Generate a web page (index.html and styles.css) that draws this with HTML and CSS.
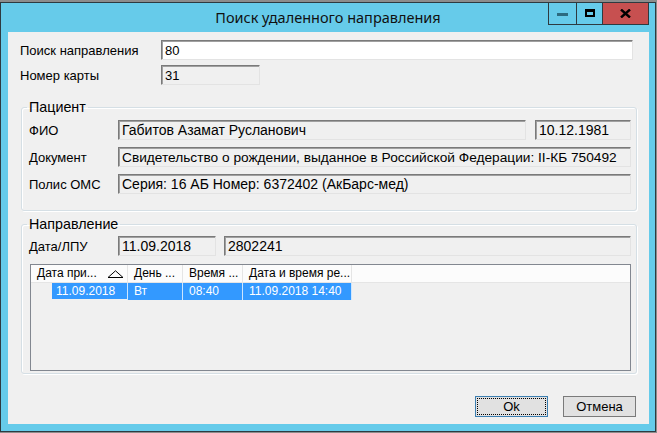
FILE: index.html
```html
<!DOCTYPE html>
<html lang="ru">
  <head>
    <meta charset="UTF-8" />
    <title>Поиск удаленного направления</title>
    <link rel="stylesheet" href="styles.css">
  </head>
  <body>
    <div class="window">
      <div class="titlebar">
        <span></span>
        <div class="title">Поиск удаленного направления</div>
        <div class="caption-btns">
          <span class="cbtn cbtn-min"><i></i></span>
          <span class="cbtn cbtn-max"><i></i></span>
          <span class="cbtn cbtn-close">
            <svg width="11" height="9" viewBox="0 0 11 9"><path d="M1 0.5 L10 8.5 M10 0.5 L1 8.5" stroke="#000" stroke-width="2.4"/></svg>
          </span>
        </div>
      </div>

      <div class="client">
        <div class="row top-row">
          <label class="lbl lbl-wide">Поиск направления</label>
          <div class="field field-white field-search">80</div>
        </div>
        <div class="row top-row">
          <label class="lbl lbl-wide">Номер карты</label>
          <div class="field field-card">31</div>
        </div>

        <!-- Patient -->
        <fieldset class="group group-patient">
          <legend>Пациент</legend>
          <div class="row">
            <label class="lbl">ФИО</label>
            <div class="field field-grow">Габитов Азамат Русланович</div>
            <div class="field field-date">10.12.1981</div>
          </div>
          <div class="row">
            <label class="lbl">Документ</label>
            <div class="field field-grow field-doc">Свидетельство о рождении, выданное в Российской Федерации: II-КБ 750492</div>
          </div>
          <div class="row">
            <label class="lbl">Полис ОМС</label>
            <div class="field field-grow">Серия: 16 АБ Номер: 6372402 (АкБарс-мед)</div>
          </div>
        </fieldset>

        <!-- Referral -->
        <fieldset class="group group-ref">
          <legend>Направление</legend>
          <div class="row">
            <label class="lbl">Дата/ЛПУ</label>
            <div class="field field-refdate">11.09.2018</div>
            <div class="field field-grow">2802241</div>
          </div>
          <div class="listview">
            <div class="lv-row lv-head">
              <div class="lv-cell c1">Дата при...
                <svg class="sort" width="17" height="8" viewBox="0 0 17 8"><path d="M1 7.5 L8.5 0.8 L16 7.5 Z" fill="none" stroke="#000" stroke-width="1"/></svg>
              </div>
              <div class="lv-cell c2">День ...</div>
              <div class="lv-cell c3">Время ...</div>
              <div class="lv-cell c4">Дата и время ре...</div>
            </div>
            <div class="lv-row lv-sel">
              <div class="lv-cell c1"><span class="hl">11.09.2018</span></div>
              <div class="lv-cell c2">Вт</div>
              <div class="lv-cell c3">08:40</div>
              <div class="lv-cell c4">11.09.2018 14:40</div>
            </div>
          </div>
        </fieldset>

        <div class="actions">
          <button class="btn btn-default"><span>Ok</span></button>
          <button class="btn">Отмена</button>
        </div>
      </div>
    </div>
  </body>
</html>
```

FILE: styles.css
```css
/* ---------- Base ---------- */
*{box-sizing:border-box;margin:0;padding:0;}
body{background:#8c8c8c;font-family:"Liberation Sans",Arial,sans-serif;font-size:13px;color:#000;width:657px;height:433px;overflow:hidden;}

/* ---------- Window frame ---------- */
.window{margin-top:2px;width:656px;height:430px;border:1px solid #2e3a40;background:#66cbea;display:flex;flex-direction:column;}
.titlebar{height:29px;display:grid;grid-template-columns:1fr auto 1fr;align-items:start;}
.title{font-family:"Noto Sans","Open Sans",sans-serif;font-size:14.5px;line-height:29px;color:#111;white-space:nowrap;}
.caption-btns{justify-self:end;display:flex;margin-right:6px;border:1px solid #2e3a40;border-top:none;height:22px;}
.cbtn{display:flex;align-items:center;justify-content:center;height:21px;}
.cbtn-min{width:28px;border-right:1px solid #2e3a40;}
.cbtn-min i{width:11px;height:3px;background:#2c6b80;margin-top:2px;}
.cbtn-max{width:26px;border-right:1px solid #2e3a40;}
.cbtn-max i{width:10px;height:8px;border:2px solid #000;border-top-width:3px;margin-top:-1px;}
.cbtn-close{width:45px;background:#c75050;}
.cbtn-close svg{margin-top:-1px;}

/* ---------- Client area ---------- */
.client{flex:1;margin:0 6px 7px 7px;background:#f0f0f0;padding:8px 12px 0 12px;display:flex;flex-direction:column;}
.row{display:flex;align-items:center;gap:9px;}
.top-row{gap:0;margin-bottom:5px;}
.lbl{width:80px;flex:none;white-space:nowrap;}
.lbl-wide{width:141px;}

.field{height:20px;line-height:17px;padding:1px 0 0 3px;border:1px solid;border-color:#7a7a7a #e3e3e3 #e3e3e3 #7a7a7a;box-shadow:inset 1px 1px 0 #a0a0a0;background:#f0f0f0;white-space:nowrap;overflow:hidden;font-size:14px;}
.field-white{background:#fff;}
.field-search{width:472px;font-size:13px;}
.field-card{width:99px;font-size:13px;}
.field-grow{flex:1;}
.field-doc{font-size:13.7px;}
.field-date{width:96px;}
.field-refdate{width:98px;margin-right:-1px;}

/* ---------- Group boxes ---------- */
.group{border:1px solid #d5dfe5;border-radius:3px;box-shadow:inset 1px 1px 0 #fff,1px 1px 0 #fff;margin:10px 0 0 1px;padding:5px 5px 0 7px;}
.group legend{margin-left:-2px;padding:0 2px;line-height:15px;font-size:14.3px;}
.group-patient{height:111px;}
.group-patient .row{margin-bottom:7px;}
.group-ref{margin-top:6px;height:157px;padding-top:4px;}
.group-ref .row{margin-bottom:8px;}

/* ---------- List view ---------- */
.listview{margin-left:1px;height:107px;border:1px solid #828790;background:#f0f0f0;font-size:12px;}
.lv-row{display:flex;height:17px;line-height:16px;}
.lv-head{background:#fcfcfc;border-bottom:1px solid #e5e5e5;height:18px;}
.lv-cell{padding-left:6px;border-right:1px solid #e5e5e5;white-space:nowrap;position:relative;}
.c1{width:97px;}
.c2{width:55px;}
.c3{width:60px;}
.c4{width:109px;}
.sort{position:absolute;right:3px;top:5px;}
.lv-sel .lv-cell{background:#3399ff;color:#fff;border-right-color:#cde6ff;}
.lv-sel .c1{background:none;padding-left:0;}
.lv-sel .hl{display:block;margin-left:21px;padding-left:4px;background:#3399ff;}

/* ---------- Buttons ---------- */
.actions{display:flex;justify-content:flex-end;gap:15px;margin-top:22px;padding-right:1px;}
.btn{width:73px;height:21px;border:1px solid #7a7a7a;background:#e1e1e1;font-family:inherit;font-size:13px;color:#000;}
.btn-default{border-color:#3c7fb1;padding:1px;}
.btn-default span{display:block;height:100%;border:1px dotted #000;line-height:15px;}
```
